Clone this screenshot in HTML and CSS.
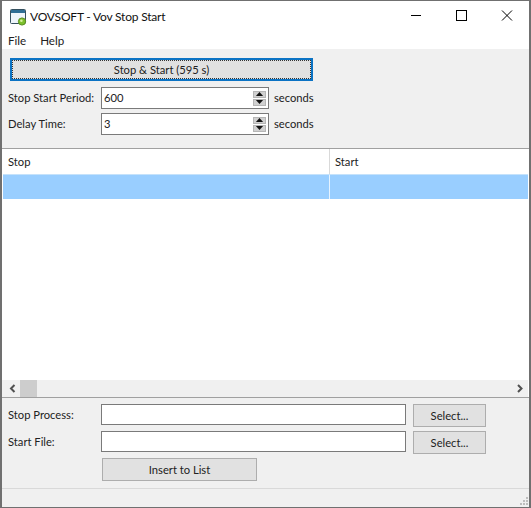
FILE: index.html

```html
<!DOCTYPE html>
<html lang="en">
<head>
<meta charset="UTF-8">
<title>VOVSOFT - Vov Stop Start</title>
<link rel="stylesheet" href="styles.css">
</head>
<body>
<div class="window">
    <div class="titlebar">
        <svg class="app-icon" width="18" height="18" viewBox="0 0 18 18">
            <rect x="1.5" y="1.5" width="15" height="14" rx="1" fill="#eef5fb" stroke="#35505f"/>
            <rect x="2" y="2" width="14" height="3" fill="#2f6f96"/>
            <circle cx="13" cy="13.5" r="3.6" fill="#7cc02c" stroke="#5b8f22"/>
            <circle cx="12.4" cy="12.8" r="1.3" fill="#d6f0a0"/>
        </svg>
        <span class="title">VOVSOFT - Vov Stop Start</span>
        <div class="caption-btns">
            <svg width="46" height="30" viewBox="0 0 46 30"><path d="M20 14.500h10" stroke="#000" fill="none"/></svg>
            <svg width="46" height="30" viewBox="0 0 46 30"><rect x="19.500" y="9.500" width="10" height="10" stroke="#000" fill="none"/></svg>
            <svg width="46" height="30" viewBox="0 0 46 30"><path d="M19 9.500l10 10M29 9.500l-10 10" stroke="#000" fill="none"/></svg>
        </div>
    </div>
    <div class="menubar">
        <span>File</span>
        <span>Help</span>
    </div>

    <div class="top-panel">
        <button class="btn btn-main"><span class="focus-ring">Stop &amp; Start (595 s)</span></button>
        <div class="form-row">
            <label>Stop Start Period:</label>
            <div class="spin">
                <span class="spin-value">600</span>
                <div class="spin-btns">
                    <span class="spin-btn"><svg width="9" height="5" viewBox="0 0 9 5"><path d="M4.5 0L9 5H0z"/></svg></span>
                    <span class="spin-btn"><svg width="9" height="5" viewBox="0 0 9 5"><path d="M0 0h9L4.500 5z"/></svg></span>
                </div>
            </div>
            <span class="unit">seconds</span>
        </div>
        <div class="form-row">
            <label>Delay Time:</label>
            <div class="spin">
                <span class="spin-value">3</span>
                <div class="spin-btns">
                    <span class="spin-btn"><svg width="9" height="5" viewBox="0 0 9 5"><path d="M4.5 0L9 5H0z"/></svg></span>
                    <span class="spin-btn"><svg width="9" height="5" viewBox="0 0 9 5"><path d="M0 0h9L4.500 5z"/></svg></span>
                </div>
            </div>
            <span class="unit">seconds</span>
        </div>
    </div>

    <div class="list">
        <div class="list-head">
            <div class="col-stop">Stop</div>
            <div class="col-start">Start</div>
        </div>
        <div class="list-row">
            <div class="col-stop"></div>
            <div class="col-start"></div>
        </div>
        <div class="list-body"></div>
        <div class="scrollbar">
            <svg class="arrow" width="18" height="17" viewBox="0 0 18 17"><path d="M12.500 5L9 8.500 12.500 12" stroke="#505050" stroke-width="2" fill="none"/></svg>
            <span class="thumb"></span>
            <span class="track"></span>
            <svg class="arrow" width="17" height="17" viewBox="0 0 17 17"><path d="M7 5l3.500 3.500L7 12" stroke="#505050" stroke-width="2" fill="none"/></svg>
        </div>
    </div>

    <div class="bottom-panel">
        <div class="file-row">
            <label>Stop Process:</label>
            <span class="text-input"></span>
            <button class="btn btn-select">Select...</button>
        </div>
        <div class="file-row">
            <label>Start File:</label>
            <span class="text-input"></span>
            <button class="btn btn-select">Select...</button>
        </div>
        <button class="btn btn-insert">Insert to List</button>
    </div>

    <div class="statusbar">
        <svg class="grip" width="8" height="8" viewBox="0 0 8 8" fill="#bdbdbd">
            <rect x="6" y="0" width="2" height="2"/>
            <rect x="3" y="3" width="2" height="2"/><rect x="6" y="3" width="2" height="2"/>
            <rect x="0" y="6" width="2" height="2"/><rect x="3" y="6" width="2" height="2"/><rect x="6" y="6" width="2" height="2"/>
        </svg>
    </div>
</div>
</body>
</html>
```

FILE: styles.css

```css
html, body {
    margin: 0;
    padding: 0;
}
body {
    width: 531px;
    height: 508px;
    overflow: hidden;
    font-family: Lato, "Noto Sans", sans-serif;
    font-size: 11.2px;
    color: #222;
    background-color: #f0f0f0;
}
.window {
    width: 531px;
    height: 508px;
    box-sizing: border-box;
    border: 1px solid #707070;
    border-left-width: 2px;
    border-right-width: 2px;
    display: flex;
    flex-direction: column;
}
.titlebar {
    height: 30px;
    flex: none;
    background-color: #fff;
    display: flex;
    align-items: center;
    padding-left: 7px;
}
.app-icon {
    margin-right: 3px;
    margin-top: 1px;
}
.title {
    font-size: 12px;
    letter-spacing: -0.2px;
    color: #111;
}
.caption-btns {
    margin-left: auto;
    display: flex;
}
.menubar {
    height: 18px;
    flex: none;
    background-color: #fff;
    display: flex;
    gap: 14px;
    padding-left: 6px;
    align-items: center;
    font-size: 11.6px;
}
.top-panel {
    height: 99px;
    flex: none;
    box-sizing: border-box;
    padding: 9px 0 0 6px;
}
.btn {
    font-family: inherit;
    font-size: 11.2px;
    color: #222;
    background-color: #e1e1e1;
    border: 1px solid #adadad;
    border-radius: 0;
    padding: 0;
    cursor: pointer;
}
.btn-main {
    display: block;
    width: 303px;
    height: 23px;
    margin-left: 2px;
    border: 2px solid #0b73c4;
    padding: 0;
}
.focus-ring {
    display: flex;
    align-items: center;
    justify-content: center;
    height: 100%;
    box-sizing: border-box;
    border: 1px dotted #333;
}
.form-row {
    display: flex;
    align-items: center;
    margin-top: 6px;
    height: 22px;
}
.form-row + .form-row {
    margin-top: 4px;
}
.form-row label {
    width: 93px;
    flex: none;
    white-space: nowrap;
    padding-bottom: 2px;
}
.spin {
    width: 168px;
    height: 22px;
    box-sizing: border-box;
    background-color: #fff;
    border: 1px solid #7a7a7a;
    display: flex;
    align-items: center;
    justify-content: space-between;
    padding: 0 2px;
}
.spin-value {
    padding-bottom: 2px;
}
.spin-btns {
    display: flex;
    flex-direction: column;
    gap: 1px;
}
.spin-btn {
    width: 13px;
    height: 7px;
    background-color: #d0d0d0;
    border: 1px solid #b5b5b5;
    box-sizing: border-box;
    display: flex;
    align-items: center;
    justify-content: center;
}
.spin-btn svg {
    fill: #111;
    width: 9px;
    height: 4px;
}
.unit {
    margin-left: 5px;
    padding-bottom: 2px;
}
.list {
    height: 250px;
    flex: none;
    box-sizing: border-box;
    border-top: 1px solid #a0a0a0;
    border-bottom: 1px solid #a0a0a0;
    background-color: #fff;
    display: flex;
    flex-direction: column;
    padding: 0 1px;
}
.list-head {
    height: 25px;
    flex: none;
    display: flex;
    align-items: center;
}
.list-head .col-stop, .list-head .col-start {
    display: flex;
    align-items: center;
    height: 100%;
}
.col-stop {
    width: 327px;
    flex: none;
    box-sizing: border-box;
    padding-left: 5px;
    border-right: 1px solid #d9d9d9;
}
.col-start {
    flex: 1;
    padding-left: 5px;
}
.list-row {
    height: 25px;
    flex: none;
    display: flex;
    background-color: #99ceff;
    border-top: 1px solid #c5e2fb;
    box-sizing: border-box;
}
.list-row .col-stop {
    border-right-color: #e6f3ff;
}
.list-body {
    flex: 1;
}
.scrollbar {
    height: 17px;
    flex: none;
    display: flex;
    background-color: #f0f0f0;
    margin-left: -1px;
}
.arrow {
    flex: none;
}
.thumb {
    width: 17px;
    flex: none;
    background-color: #cdcdcd;
}
.track {
    flex: 1;
}
.bottom-panel {
    height: 90px;
    flex: none;
    box-sizing: border-box;
    padding: 6px 0 0 6px;
}
.file-row {
    display: flex;
    height: 23px;
    margin-bottom: 4px;
}
.file-row label {
    width: 93px;
    flex: none;
    height: 20px;
    display: flex;
    align-items: center;
}
.text-input {
    width: 305px;
    height: 21px;
    flex: none;
    box-sizing: border-box;
    background-color: #fff;
    border: 1px solid #7a7a7a;
}
.btn-select {
    width: 73px;
    height: 23px;
    margin-left: 7px;
}
.btn-insert {
    display: block;
    width: 155px;
    height: 23px;
    margin-left: 94px;
}
.statusbar {
    flex: 1;
    border-top: 1px solid #d9d9d9;
    display: flex;
    align-items: flex-end;
    justify-content: flex-end;
}
.grip {
    margin: 0 1px 2px 0;
}
```
